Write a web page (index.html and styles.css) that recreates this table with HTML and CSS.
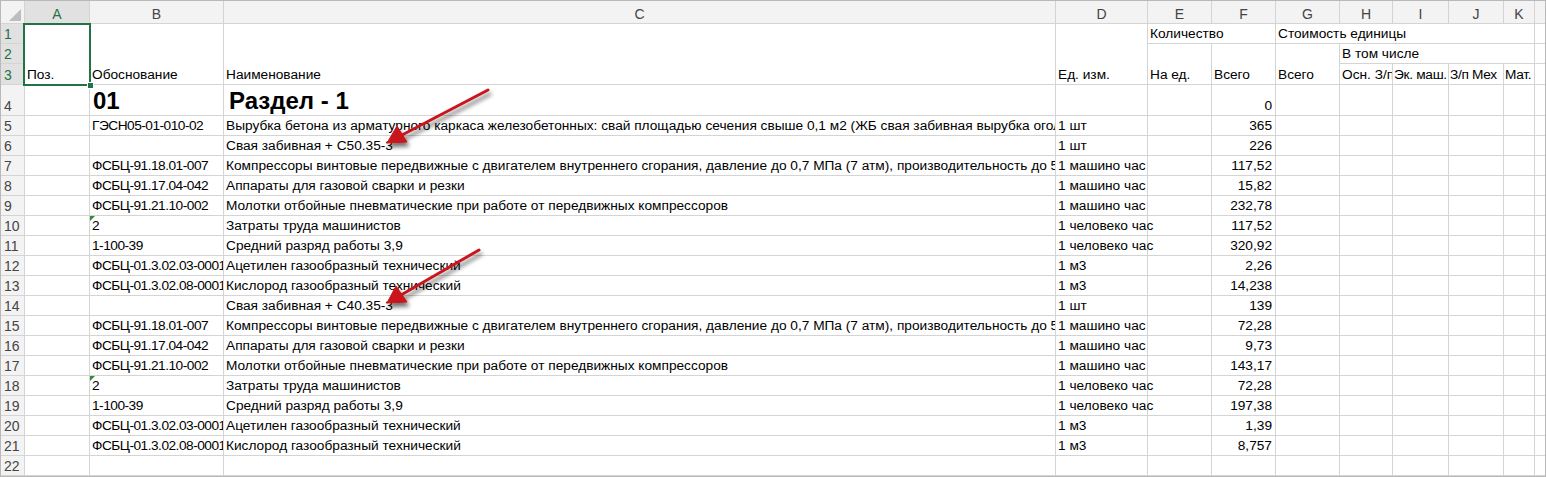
FILE: index.html
```html
<!DOCTYPE html>
<html lang="ru">
<head>
<meta charset="utf-8">
<title>Смета</title>
<link rel="stylesheet" href="styles.css">
</head>
<body>
<div class="frame">
  <div class="sheet">
    <!-- column headers -->
    <div class="hd corner"><span class="corner-tri"></span></div>
    <div class="hd col sel">A</div>
    <div class="hd col">B</div>
    <div class="hd col">C</div>
    <div class="hd col">D</div>
    <div class="hd col">E</div>
    <div class="hd col">F</div>
    <div class="hd col">G</div>
    <div class="hd col">H</div>
    <div class="hd col">I</div>
    <div class="hd col">J</div>
    <div class="hd col">K</div>
    <div class="hd col"></div>

    <!-- row 1 -->
    <div class="hd rh sel">1</div>
    <div class="c rs3">Поз.</div>
    <div class="c rs3">Обоснование</div>
    <div class="c rs3">Наименование</div>
    <div class="c rs3">Ед. изм.</div>
    <div class="c cs2">Количество</div>
    <div class="c cs5">Стоимость единицы</div>
    <div class="c"></div>

    <!-- row 2 -->
    <div class="hd rh sel">2</div>
    <div class="c rs2">На ед.</div>
    <div class="c rs2">Всего</div>
    <div class="c rs2">Всего</div>
    <div class="c cs4">В том числе</div>
    <div class="c"></div>

    <!-- row 3 -->
    <div class="hd rh sel">3</div>
    <div class="c">Осн. З/п</div>
    <div class="c tight">Эк. маш.</div>
    <div class="c tight">З/п Мех</div>
    <div class="c tight">Мат.</div>
    <div class="c"></div>

    <!-- row 4 -->
    <div class="hd rh">4</div>
    <div class="c"></div>
    <div class="c big big-b">01</div>
    <div class="c big">Раздел - 1</div>
    <div class="c"></div><div class="c"></div>
    <div class="c num">0</div>
    <div class="c"></div><div class="c"></div><div class="c"></div><div class="c"></div><div class="c"></div><div class="c"></div>

    <!-- row 5 -->
    <div class="hd rh">5</div>
    <div class="c"></div>
    <div class="c code">ГЭСН05-01-010-02</div>
    <div class="c">Вырубка бетона из арматурного каркаса железобетонных: свай площадью сечения свыше 0,1 м2 (ЖБ свая забивная вырубка оголовка)</div>
    <div class="c">1 шт</div><div class="c"></div>
    <div class="c num">365</div>
    <div class="c"></div><div class="c"></div><div class="c"></div><div class="c"></div><div class="c"></div><div class="c"></div>

    <!-- row 6 -->
    <div class="hd rh">6</div>
    <div class="c"></div><div class="c"></div>
    <div class="c">Свая забивная + С50.35-3</div>
    <div class="c">1 шт</div><div class="c"></div>
    <div class="c num">226</div>
    <div class="c"></div><div class="c"></div><div class="c"></div><div class="c"></div><div class="c"></div><div class="c"></div>

    <!-- row 7 -->
    <div class="hd rh">7</div>
    <div class="c"></div>
    <div class="c code">ФСБЦ-91.18.01-007</div>
    <div class="c">Компрессоры винтовые передвижные с двигателем внутреннего сгорания, давление до 0,7 МПа (7 атм), производительность до 5 м3/мин</div>
    <div class="c">1 машино час</div><div class="c"></div>
    <div class="c num">117,52</div>
    <div class="c"></div><div class="c"></div><div class="c"></div><div class="c"></div><div class="c"></div><div class="c"></div>

    <!-- row 8 -->
    <div class="hd rh">8</div>
    <div class="c"></div>
    <div class="c code">ФСБЦ-91.17.04-042</div>
    <div class="c">Аппараты для газовой сварки и резки</div>
    <div class="c">1 машино час</div><div class="c"></div>
    <div class="c num">15,82</div>
    <div class="c"></div><div class="c"></div><div class="c"></div><div class="c"></div><div class="c"></div><div class="c"></div>

    <!-- row 9 -->
    <div class="hd rh">9</div>
    <div class="c"></div>
    <div class="c code">ФСБЦ-91.21.10-002</div>
    <div class="c">Молотки отбойные пневматические при работе от передвижных компрессоров</div>
    <div class="c">1 машино час</div><div class="c"></div>
    <div class="c num">232,78</div>
    <div class="c"></div><div class="c"></div><div class="c"></div><div class="c"></div><div class="c"></div><div class="c"></div>

    <!-- row 10 -->
    <div class="hd rh">10</div>
    <div class="c"></div>
    <div class="c flag">2</div>
    <div class="c">Затраты труда машинистов</div>
    <div class="c ov">1 человеко час</div><div class="c"></div>
    <div class="c num">117,52</div>
    <div class="c"></div><div class="c"></div><div class="c"></div><div class="c"></div><div class="c"></div><div class="c"></div>

    <!-- row 11 -->
    <div class="hd rh">11</div>
    <div class="c"></div>
    <div class="c code">1-100-39</div>
    <div class="c">Средний разряд работы 3,9</div>
    <div class="c ov">1 человеко час</div><div class="c"></div>
    <div class="c num">320,92</div>
    <div class="c"></div><div class="c"></div><div class="c"></div><div class="c"></div><div class="c"></div><div class="c"></div>

    <!-- row 12 -->
    <div class="hd rh">12</div>
    <div class="c"></div>
    <div class="c code">ФСБЦ-01.3.02.03-0001</div>
    <div class="c">Ацетилен газообразный технический</div>
    <div class="c">1 м3</div><div class="c"></div>
    <div class="c num">2,26</div>
    <div class="c"></div><div class="c"></div><div class="c"></div><div class="c"></div><div class="c"></div><div class="c"></div>

    <!-- row 13 -->
    <div class="hd rh">13</div>
    <div class="c"></div>
    <div class="c code">ФСБЦ-01.3.02.08-0001</div>
    <div class="c">Кислород газообразный технический</div>
    <div class="c">1 м3</div><div class="c"></div>
    <div class="c num">14,238</div>
    <div class="c"></div><div class="c"></div><div class="c"></div><div class="c"></div><div class="c"></div><div class="c"></div>

    <!-- row 14 -->
    <div class="hd rh">14</div>
    <div class="c"></div><div class="c"></div>
    <div class="c">Свая забивная + С40.35-3</div>
    <div class="c">1 шт</div><div class="c"></div>
    <div class="c num">139</div>
    <div class="c"></div><div class="c"></div><div class="c"></div><div class="c"></div><div class="c"></div><div class="c"></div>

    <!-- row 15 -->
    <div class="hd rh">15</div>
    <div class="c"></div>
    <div class="c code">ФСБЦ-91.18.01-007</div>
    <div class="c">Компрессоры винтовые передвижные с двигателем внутреннего сгорания, давление до 0,7 МПа (7 атм), производительность до 5 м3/мин</div>
    <div class="c">1 машино час</div><div class="c"></div>
    <div class="c num">72,28</div>
    <div class="c"></div><div class="c"></div><div class="c"></div><div class="c"></div><div class="c"></div><div class="c"></div>

    <!-- row 16 -->
    <div class="hd rh">16</div>
    <div class="c"></div>
    <div class="c code">ФСБЦ-91.17.04-042</div>
    <div class="c">Аппараты для газовой сварки и резки</div>
    <div class="c">1 машино час</div><div class="c"></div>
    <div class="c num">9,73</div>
    <div class="c"></div><div class="c"></div><div class="c"></div><div class="c"></div><div class="c"></div><div class="c"></div>

    <!-- row 17 -->
    <div class="hd rh">17</div>
    <div class="c"></div>
    <div class="c code">ФСБЦ-91.21.10-002</div>
    <div class="c">Молотки отбойные пневматические при работе от передвижных компрессоров</div>
    <div class="c">1 машино час</div><div class="c"></div>
    <div class="c num">143,17</div>
    <div class="c"></div><div class="c"></div><div class="c"></div><div class="c"></div><div class="c"></div><div class="c"></div>

    <!-- row 18 -->
    <div class="hd rh">18</div>
    <div class="c"></div>
    <div class="c flag">2</div>
    <div class="c">Затраты труда машинистов</div>
    <div class="c ov">1 человеко час</div><div class="c"></div>
    <div class="c num">72,28</div>
    <div class="c"></div><div class="c"></div><div class="c"></div><div class="c"></div><div class="c"></div><div class="c"></div>

    <!-- row 19 -->
    <div class="hd rh">19</div>
    <div class="c"></div>
    <div class="c code">1-100-39</div>
    <div class="c">Средний разряд работы 3,9</div>
    <div class="c ov">1 человеко час</div><div class="c"></div>
    <div class="c num">197,38</div>
    <div class="c"></div><div class="c"></div><div class="c"></div><div class="c"></div><div class="c"></div><div class="c"></div>

    <!-- row 20 -->
    <div class="hd rh">20</div>
    <div class="c"></div>
    <div class="c code">ФСБЦ-01.3.02.03-0001</div>
    <div class="c">Ацетилен газообразный технический</div>
    <div class="c">1 м3</div><div class="c"></div>
    <div class="c num">1,39</div>
    <div class="c"></div><div class="c"></div><div class="c"></div><div class="c"></div><div class="c"></div><div class="c"></div>

    <!-- row 21 -->
    <div class="hd rh">21</div>
    <div class="c"></div>
    <div class="c code">ФСБЦ-01.3.02.08-0001</div>
    <div class="c">Кислород газообразный технический</div>
    <div class="c">1 м3</div><div class="c"></div>
    <div class="c num">8,757</div>
    <div class="c"></div><div class="c"></div><div class="c"></div><div class="c"></div><div class="c"></div><div class="c"></div>

    <!-- row 22 -->
    <div class="hd rh">22</div>
    <div class="c"></div><div class="c"></div><div class="c"></div><div class="c"></div><div class="c"></div><div class="c"></div>
    <div class="c"></div><div class="c"></div><div class="c"></div><div class="c"></div><div class="c"></div><div class="c"></div>

    <!-- selection overlay -->
    <div class="selection"><span class="handle"></span></div>

    <!-- annotation arrows -->
    <svg class="arrows" width="1546" height="477" viewBox="0 0 1546 477">
      <defs>
        <filter id="sh" x="-20%" y="-20%" width="140%" height="160%">
          <feGaussianBlur in="SourceAlpha" stdDeviation="2"/>
          <feOffset dx="2" dy="4" result="b"/>
          <feComponentTransfer><feFuncA type="linear" slope="0.55"/></feComponentTransfer>
          <feMerge><feMergeNode/><feMergeNode in="SourceGraphic"/></feMerge>
        </filter>
      </defs>
      <g filter="url(#sh)" fill="#c8161d" stroke="#c8161d">
        <line x1="488" y1="90" x2="402" y2="135" stroke-width="3" stroke-linecap="round"/>
        <polygon points="387,143 397,126 407,142" stroke-width="1" stroke-linejoin="round"/>
        <line x1="479" y1="250" x2="401" y2="295" stroke-width="3" stroke-linecap="round"/>
        <polygon points="387,303 396,286 407,302" stroke-width="1" stroke-linejoin="round"/>
      </g>
    </svg>
  </div>
</div>
</body>
</html>
```

FILE: styles.css
```css
* { box-sizing: border-box; }

html, body {
  margin: 0;
  padding: 0;
  background: #ffffff;
}

.frame {
  width: 1546px;
  height: 477px;
  border: 1px solid #b9b9b9;
  background: #d4d4d4;
  overflow: hidden;
}

.sheet {
  position: relative;
  display: grid;
  grid-template-columns: 23px 64px 133px 831px 91px 63px 63px 63px 52px 55px 54px 30px 10px;
  grid-template-rows: 22px 19px 19px 20px 30px repeat(18, 19px);
  gap: 1px;
  background: #d4d4d4;
  font-family: "Liberation Sans", Arial, sans-serif;
  font-size: 13.7px;
  color: #000;
}

.c {
  background: #fff;
  position: relative;
  display: flex;
  align-items: flex-end;
  padding: 0 2px 1px 2px;
  white-space: nowrap;
  overflow: hidden;
  line-height: 16px;
}

.c.ov {
  overflow: visible;
  z-index: 1;
}

.c.code { letter-spacing: -0.5px; }
.c.tight { letter-spacing: -0.3px; padding-left: 1px; }

.num { justify-content: flex-end; padding-right: 3px; }

.big {
  font-weight: bold;
  font-size: 24px;
  line-height: 26px;
  padding-left: 5px;
  padding-bottom: 1px;
}
.big-b { padding-left: 3px; }

.rs3 { grid-row: span 3; }
.rs2 { grid-row: span 2; }
.cs2 { grid-column: span 2; }
.cs4 { grid-column: span 4; }
.cs5 { grid-column: span 5; }

.flag::before {
  content: "";
  position: absolute;
  left: 0;
  top: 0;
  border-top: 5px solid #2e8b3a;
  border-right: 5px solid transparent;
}

.hd {
  background: #f3f3f3;
  color: #444;
  font-size: 14px;
  display: flex;
  align-items: center;
  justify-content: center;
  line-height: 16px;
}
.hd.col { padding-top: 4px; }
.hd.rh {
  justify-content: flex-start;
  align-items: flex-end;
  padding: 0 0 1px 3px;
}
.hd.sel {
  background: #e1e1e1;
  color: #217346;
}

.corner { position: relative; }
.corner-tri {
  position: absolute;
  right: 3px;
  bottom: 2px;
  width: 0;
  height: 0;
  border-bottom: 12px solid #bdbdbd;
  border-left: 12px solid transparent;
}

.selection {
  position: absolute;
  left: 22px;
  top: 22px;
  width: 68px;
  height: 63px;
  border: 2px solid #217346;
  pointer-events: none;
  z-index: 2;
}
.handle {
  position: absolute;
  right: -5px;
  bottom: -5px;
  width: 7px;
  height: 7px;
  background: #217346;
  border: 1px solid #fff;
}

.arrows {
  position: absolute;
  left: -1px;
  top: -1px;
  pointer-events: none;
  z-index: 3;
}
```
